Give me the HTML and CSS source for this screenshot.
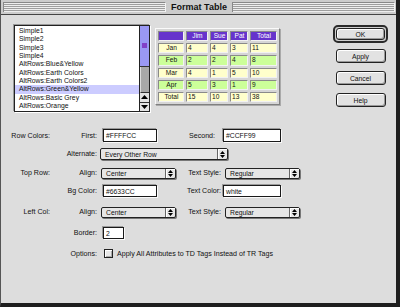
FILE: index.html
```html
<!DOCTYPE html>
<html lang="en">
<head>
    <meta charset="UTF-8">
    <title>Format Table</title>
    <link rel="stylesheet" href="styles.css">
</head>
<body>
    <div class="window">
        <div class="titlebar">
            <span class="stripes"></span>
            <span class="title">Format Table</span>
            <span class="stripes"></span>
        </div>

        <div class="content">
            <div class="top">
                <div class="list">
                    <ul class="list-items">
                        <li>Simple1</li>
                        <li>Simple2</li>
                        <li>Simple3</li>
                        <li>Simple4</li>
                        <li>AltRows:Blue&amp;Yellow</li>
                        <li>AltRows:Earth Colors</li>
                        <li>AltRows:Earth Colors2</li>
                        <li class="selected">AltRows:Green&amp;Yellow</li>
                        <li>AltRows:Basic Grey</li>
                        <li>AltRows:Orange</li>
                        <li>AltRows:Red</li>
                    </ul>
                    <div class="scrollbar">
                        <div class="scroll-thumb"><span class="grip"></span></div>
                        <div class="scroll-track"></div>
                        <div class="scroll-arrow">
                            <svg width="7" height="4" viewBox="0 0 7 4"><path d="M0 4 L3.5 0 L7 4 Z" fill="#000"/></svg>
                        </div>
                        <div class="scroll-arrow">
                            <svg width="7" height="4" viewBox="0 0 7 4"><path d="M0 0 L3.5 4 L7 0 Z" fill="#000"/></svg>
                        </div>
                    </div>
                </div>

                <table class="preview">
                    <tr class="head">
                        <td class="c0"></td><td class="c1">Jim</td><td class="c2">Sue</td><td class="c3">Pat</td><td class="c4">Total</td>
                    </tr>
                    <tr class="odd">
                        <td class="side">Jan</td><td>4</td><td>4</td><td>3</td><td>11</td>
                    </tr>
                    <tr class="even">
                        <td class="side">Feb</td><td>2</td><td>2</td><td>4</td><td>8</td>
                    </tr>
                    <tr class="odd">
                        <td class="side">Mar</td><td>4</td><td>1</td><td>5</td><td>10</td>
                    </tr>
                    <tr class="even">
                        <td class="side">Apr</td><td>5</td><td>3</td><td>1</td><td>9</td>
                    </tr>
                    <tr class="odd">
                        <td class="side">Total</td><td>15</td><td>10</td><td>13</td><td>38</td>
                    </tr>
                </table>

                <div class="buttons">
                    <div class="default-ring"><button class="btn btn-ok">OK</button></div>
                    <button class="btn btn-apply">Apply</button>
                    <button class="btn btn-next">Cancel</button>
                    <button class="btn btn-next">Help</button>
                </div>
            </div>

            <div class="form">
                <div class="row row-first">
                    <span class="lbl">Row Colors:</span>
                    <span class="lbl">First:</span>
                    <div class="mid">
                        <span class="input">#FFFFCC</span>
                        <span class="lbl lbl-second">Second:</span>
                    </div>
                    <span class="input input-right">#CCFF99</span>
                </div>

                <div class="row row-alt">
                    <span class="lbl"></span>
                    <span class="lbl">Alternate:</span>
                    <div class="select select-wide">
                        <span class="select-value">Every Other Row</span>
                        <span class="select-arrows">
                            <svg width="5" height="7" viewBox="0 0 5 7"><path d="M0 3 L2.5 0 L5 3 Z M0 4 L2.5 7 L5 4 Z" fill="#000"/></svg>
                        </span>
                    </div>
                </div>

                <div class="row row-top">
                    <span class="lbl">Top Row:</span>
                    <span class="lbl">Align:</span>
                    <div class="mid">
                        <div class="select">
                            <span class="select-value">Center</span>
                            <span class="select-arrows">
                                <svg width="5" height="7" viewBox="0 0 5 7"><path d="M0 3 L2.5 0 L5 3 Z M0 4 L2.5 7 L5 4 Z" fill="#000"/></svg>
                            </span>
                        </div>
                        <span class="lbl">Text Style:</span>
                    </div>
                    <div class="select select-right">
                        <span class="select-value">Regular</span>
                        <span class="select-arrows">
                            <svg width="5" height="7" viewBox="0 0 5 7"><path d="M0 3 L2.5 0 L5 3 Z M0 4 L2.5 7 L5 4 Z" fill="#000"/></svg>
                        </span>
                    </div>
                </div>

                <div class="row row-bg">
                    <span class="lbl"></span>
                    <span class="lbl">Bg Color:</span>
                    <div class="mid">
                        <span class="input">#6633CC</span>
                        <span class="lbl">Text Color:</span>
                    </div>
                    <span class="input input-right">white</span>
                </div>

                <div class="row row-far">
                    <span class="lbl">Left Col:</span>
                    <span class="lbl">Align:</span>
                    <div class="mid">
                        <div class="select">
                            <span class="select-value">Center</span>
                            <span class="select-arrows">
                                <svg width="5" height="7" viewBox="0 0 5 7"><path d="M0 3 L2.5 0 L5 3 Z M0 4 L2.5 7 L5 4 Z" fill="#000"/></svg>
                            </span>
                        </div>
                        <span class="lbl">Text Style:</span>
                    </div>
                    <div class="select select-right">
                        <span class="select-value">Regular</span>
                        <span class="select-arrows">
                            <svg width="5" height="7" viewBox="0 0 5 7"><path d="M0 3 L2.5 0 L5 3 Z M0 4 L2.5 7 L5 4 Z" fill="#000"/></svg>
                        </span>
                    </div>
                </div>

                <div class="row row-far">
                    <span class="lbl"></span>
                    <span class="lbl">Border:</span>
                    <div class="mid">
                        <span class="input input-small">2</span>
                    </div>
                </div>

                <div class="row row-far row-options">
                    <span class="lbl"></span>
                    <span class="lbl">Options:</span>
                    <div class="option">
                        <span class="checkbox"></span>
                        <span>Apply All Attributes to TD Tags Instead of TR Tags</span>
                    </div>
                </div>
            </div>
        </div>
    </div>
</body>
</html>
```

FILE: styles.css
```css
* {
    margin: 0;
    padding: 0;
    box-sizing: border-box;
}

body {
    font-family: 'Liberation Sans', Arial, sans-serif;
    font-size: 6.8px;
    color: #000;
    background-color: #dddddd;
    width: 400px;
    height: 307px;
    overflow: hidden;
}

.window {
    width: 400px;
    height: 307px;
    background-color: #dddddd;
    border-left: 1px solid #555;
    border-right: 4px solid #1e1e1e;
    border-bottom: 4px solid #1e1e1e;
}

/* Title bar */
.titlebar {
    height: 15px;
    display: flex;
    align-items: center;
    background-color: #cccccc;
    border-bottom: 1px solid #444;
    padding: 0 1px 0 2px;
}

.stripes {
    flex: 1;
    height: 10px;
    background: repeating-linear-gradient(#eeeeee 0 1px, #9e9e9e 1px 2px);
    border-top: 1px solid #888;
    border-left: 1px solid #888;
    border-right: 1px solid #f4f4f4;
}

.title {
    font-weight: bold;
    font-size: 9px;
    padding: 0 5px;
    color: #111;
}

.content {
    padding: 10px 8px 0 13px;
}

.top {
    display: flex;
    align-items: flex-start;
}

/* List of table styles */
.list {
    width: 136px;
    height: 87px;
    display: flex;
    border: 1px solid #222;
    background-color: #fff;
    box-shadow: 1px 1px 0 #fff, -1px -1px 0 #999;
}

.list-items {
    flex: 1;
    list-style: none;
    overflow: hidden;
    padding-top: 1px;
}

.list-items li {
    height: 8.33px;
    line-height: 8.33px;
    padding-left: 4px;
    white-space: nowrap;
    color: #111;
}

.list-items li.selected {
    background-color: #ccccff;
}

.scrollbar {
    width: 10px;
    display: flex;
    flex-direction: column;
    border-left: 1px solid #222;
}

.scroll-thumb {
    height: 41px;
    background-color: #9a98f4;
    border-bottom: 1px solid #333;
    display: flex;
    justify-content: center;
    padding-top: 17px;
}

.grip {
    width: 5px;
    height: 5px;
    background-color: #8240c8;
}

.scroll-track {
    height: 26px;
    background-color: #a8a8a8;
    border-left: 1px solid #ddd;
    border-bottom: 1px solid #333;
}

.scroll-arrow {
    flex: 1;
    display: flex;
    align-items: center;
    justify-content: center;
    background-color: #e4e4e4;
}

.scroll-arrow + .scroll-arrow {
    border-top: 1px solid #333;
}

/* Preview table */
.preview {
    margin: 3px 0 0 5px;
    border-collapse: separate;
    border-spacing: 2px 2.4px;
    border: 1px solid;
    border-color: #fafafa #808080 #808080 #fafafa;
    box-shadow: 1px 1px 0 #aaa;
    background-color: #d6d6d6;
    font-size: 6.6px;
}

.preview td {
    height: 10.2px;
    padding: 0 0 0 1px;
    border: 1px solid;
    border-color: #8a8a8a #f2f2f2 #f2f2f2 #8a8a8a;
    color: #111;
    line-height: 8px;
}

.preview .head td {
    background-color: #6633cc;
    color: #fff;
    text-align: center;
}

.preview .c0 { width: 26px; }
.preview .c1 { width: 22px; }
.preview .c2 { width: 18px; }
.preview .c3 { width: 18px; }
.preview .c4 { width: 27px; }

.preview .odd td { background-color: #ffffcc; }
.preview .even td { background-color: #ccff99; }

.preview td.side {
    text-align: center;
}

/* Buttons */
.buttons {
    margin-left: auto;
    width: 55px;
    display: flex;
    flex-direction: column;
    align-items: center;
}

.default-ring {
    width: 55px;
    height: 18px;
    border: 2px solid #2a2a2a;
    border-radius: 5px;
    padding: 1px;
    background-color: #cfcfcf;
    display: flex;
}

.btn {
    width: 50px;
    height: 14px;
    font-family: inherit;
    font-size: 6.8px;
    color: #111;
    background-color: #e2e2e2;
    border: 1px solid #222;
    border-radius: 3px;
    box-shadow: inset 1px 1px 0 #fff, inset -1px -1px 0 #999;
}

.btn-ok {
    width: 100%;
    height: 100%;
}

.btn-apply {
    margin-top: 6px;
}

.btn-next {
    margin-top: 8px;
}

/* Options form */
.form {
    margin: 17px 0 0 -13px;
    font-size: 7.1px;
}

.row {
    display: grid;
    grid-template-columns: 50px 47px 124px auto;
    align-items: center;
    height: 12px;
}

.row-first {
    height: 13px;
}

.row-alt {
    margin-top: 6px;
}

.row-top {
    margin-top: 7px;
}

.row-bg {
    margin-top: 6px;
}

.row-far {
    margin-top: 9px;
}

.row-options {
    height: 11px;
}

.lbl {
    text-align: right;
    padding-right: 1px;
    white-space: nowrap;
    color: #111;
}

.lbl-second {
    padding-right: 7px;
}

.mid {
    display: flex;
    align-items: center;
    justify-content: space-between;
    height: 100%;
}

.input {
    display: flex;
    align-items: center;
    width: 54px;
    height: 12px;
    margin-left: 5px;
    padding-left: 2px;
    background-color: #fff;
    border: 1px solid #1a1a1a;
    box-shadow: 1px 1px 0 #fafafa, -1px -1px 0 #9a9a9a;
    color: #111;
    font-size: 6.8px;
}

.row-first .input {
    height: 13px;
}

.input-right {
    width: 58px;
    margin-left: 1px;
}

.input-small {
    width: 21px;
}

.select {
    display: flex;
    align-items: center;
    width: 75px;
    height: 11px;
    margin-left: 3px;
    background-color: #e6e6e6;
    border: 1px solid #222;
    border-radius: 2px;
    box-shadow: 1px 1px 0 #777;
    font-size: 6.8px;
}

.select-wide {
    grid-column: 3 / span 2;
    width: 128px;
    height: 12px;
    margin-left: 2px;
}

.select-right {
    margin-left: 3px;
}

.select-value {
    flex: 1;
    padding-left: 4px;
    color: #111;
}

.select-arrows {
    width: 10px;
    height: 100%;
    display: flex;
    align-items: center;
    justify-content: center;
    border-left: 1px solid #666;
    box-shadow: inset 1px 1px 0 #fff;
}

.option {
    grid-column: 3 / span 2;
    display: flex;
    align-items: center;
    gap: 4px;
    white-space: nowrap;
    color: #111;
}

.checkbox {
    width: 9px;
    height: 9px;
    margin-left: 6px;
    border: 1px solid #222;
    background-color: #e8e8e8;
    box-shadow: inset 1px 1px 0 #fff, inset -1px -1px 0 #aaa;
}
```
